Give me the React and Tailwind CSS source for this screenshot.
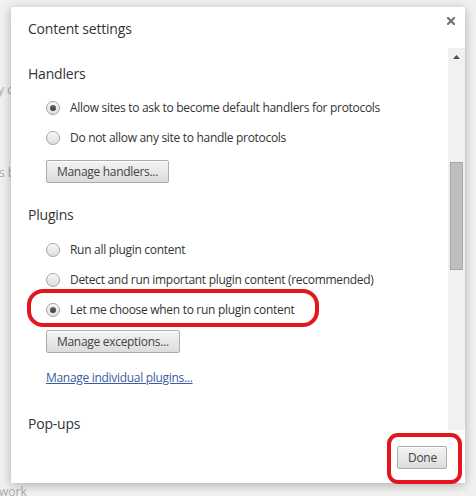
import React from "react";

function Radio({ checked }) {
  return (
    <span className="w-[14px] h-[14px] shrink-0 rounded-full border border-[#a3a3a3] bg-linear-to-b from-[#f7f7f7] to-[#dedede] flex items-center justify-center shadow-[inset_0_1px_0_rgba(255,255,255,0.8)]">
      {checked && <span className="w-[6px] h-[6px] rounded-full bg-linear-to-b from-[#6a6a6a] to-[#3c3c3c]" />}
    </span>
  );
}

function Row({ checked, children }) {
  return (
    <div className="h-[30px] flex items-center gap-[10px] pt-[2px] text-[12px] tracking-[-0.3px] text-[#333]">
      <Radio checked={checked} />
      <span>{children}</span>
    </div>
  );
}

function Btn({ children, className = "" }) {
  return (
    <button className={"h-[23px] px-[10px] border border-[#acacac] rounded-[2px] bg-linear-to-b from-[#f4f4f4] to-[#dcdcdc] text-[12px] tracking-[-0.3px] leading-[21px] text-[#444] shadow-[inset_0_1px_0_rgba(255,255,255,0.9)] " + className}>
      {children}
    </button>
  );
}

export default function App() {
  return (
    <div className="relative w-[476px] h-[496px] overflow-hidden bg-[#f1f1f1] font-['Open_Sans',sans-serif]">
      {/* page behind the dialog */}
      <div className="flex flex-col pt-[82px] text-[12px] leading-[16px] text-[#ababab]">
        <p className="-ml-[2px]">y c</p>
        <p className="mt-[67px] -ml-[1px]">s b</p>
        <p className="mt-[303px] -ml-[1px]">work</p>
      </div>

      {/* dialog */}
      <div className="absolute left-[11px] top-[7px] w-[454px] h-[476px] bg-white shadow-[0_2px_10px_rgba(0,0,0,0.28)] flex flex-col">
        <div className="relative h-[41px] shrink-0 pl-[17px] pt-[12px] text-[14px] tracking-[-0.2px] leading-[20px] text-[#333]">
          Content settings
          <button className="absolute right-[10px] top-[10px] w-[8px] h-[8px]">
            <svg viewBox="0 0 8 8" width="8" height="8">
              <path d="M1 1L7 7M7 1L1 7" stroke="#6f6f6f" strokeWidth="2" strokeLinecap="square" />
            </svg>
          </button>
        </div>

        <div className="flex h-[382px] shrink-0">
          <div className="flex-1 flex flex-col items-start pl-[17px]">
            <h3 className="mt-[16px] text-[14px] tracking-[-0.2px] leading-[20px] text-[#333] font-normal">Handlers</h3>
            <div className="mt-[8px] pl-[18px] flex flex-col items-start">
              <Row checked>Allow sites to ask to become default handlers for protocols</Row>
              <Row>Do not allow any site to handle protocols</Row>
              <Btn className="mt-[8px]">Manage handlers...</Btn>
            </div>

            <h3 className="mt-[22px] text-[14px] tracking-[-0.2px] leading-[20px] text-[#333] font-normal">Plugins</h3>
            <div className="mt-[9px] pl-[18px] flex flex-col items-start">
              <Row>Run all plugin content</Row>
              <Row>Detect and run important plugin content (recommended)</Row>
              <Row checked>Let me choose when to run plugin content</Row>
              <Btn className="mt-[6px]">Manage exceptions...</Btn>
              <a href="#" className="mt-[17px] text-[12px] tracking-[-0.3px] leading-[16px] text-[#3c5c9f] underline">
                Manage individual plugins...
              </a>
            </div>

            <h3 className="mt-[28px] text-[14px] tracking-[-0.2px] leading-[20px] text-[#333] font-normal">Pop-ups</h3>
          </div>

          <div className="w-[17px] shrink-0 bg-[#f1f1f1] flex flex-col items-center">
            <div className="h-[17px] w-full flex items-center justify-center">
              <svg viewBox="0 0 7 4" width="7" height="4">
                <path d="M0 4L3.5 0L7 4Z" fill="#505050" />
              </svg>
            </div>
            <div className="mt-[97px] w-[13px] h-[108px] bg-[#bfbfbf] border border-[#a8a8a8]" />
          </div>
        </div>

        <div className="flex-1 flex justify-end items-start pt-[16px] pr-[18px]">
          <Btn className="w-[50px] px-0 h-[22px] leading-[20px]">Done</Btn>
        </div>
      </div>

      {/* red annotations */}
      <div className="absolute left-[27px] top-[289px] w-[292px] h-[38px] border-[4px] border-[#e3151d] rounded-[16px]" />
      <div className="absolute left-[387px] top-[433px] w-[75px] h-[51px] border-[4px] border-[#e3151d] rounded-[11px]" />
    </div>
  );
}
